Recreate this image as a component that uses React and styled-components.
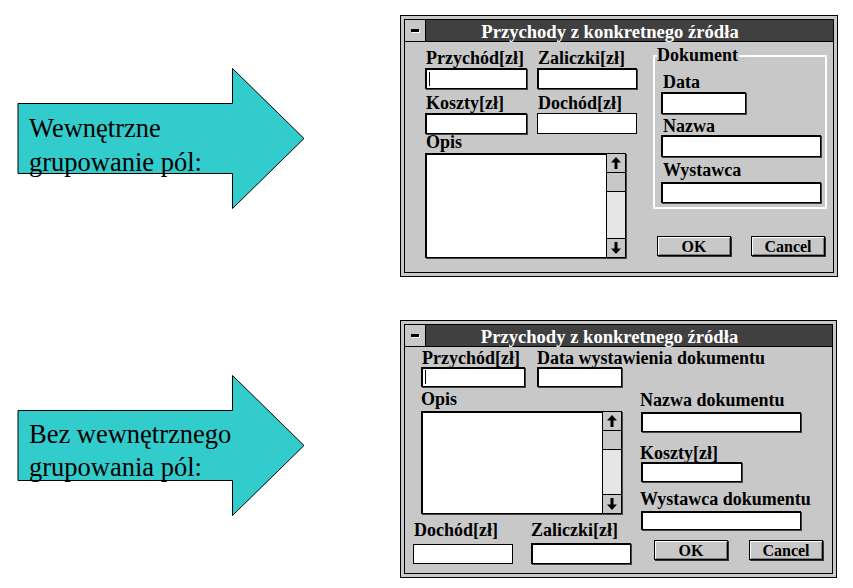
import React from 'react'
import styled, { createGlobalStyle } from 'styled-components'

const GlobalStyle = createGlobalStyle`
  html, body {
    margin: 0;
    padding: 0;
    background: #fff;
  }
  body {
    font-family: "Liberation Serif", "Times New Roman", serif;
    color: #000;
  }
`

const Page = styled.div`
  width: 853px;
  height: 588px;
  padding-top: 15px;
  box-sizing: border-box;
  display: flex;
  flex-direction: column;
  gap: 43px;
`

const Row = styled.div`
  display: flex;
  align-items: flex-start;
`

/* ---------- arrow ---------- */

const ArrowSlot = styled.div`
  flex: none;
  width: 400px;
  box-sizing: border-box;
  padding: ${({ $top }) => $top}px 0 0 17px;
`

const ArrowShape = styled.div`
  position: relative;
  width: 288px;
  height: 141px;
`

const ArrowSvg = styled.svg`
  position: absolute;
  left: 0;
  top: 0;
`

const ArrowText = styled.p`
  position: relative;
  margin: 0;
  padding: 43px 0 0 12px;
  font-family: "Liberation Serif", "Times New Roman", serif;
  font-size: 26.5px;
  line-height: ${({ $lh }) => $lh}px;
  white-space: nowrap;
`

const Arrow = ({ top, lh, lines }) => (
  <ArrowSlot $top={top}>
    <ArrowShape>
      <ArrowSvg width="288" height="141" viewBox="0 0 288 141">
        <polygon
          points="1,35.5 215.5,35.5 215.5,0.5 287,70.5 215.5,140.5 215.5,105.5 1,105.5"
          fill="#33cccc"
          stroke="#000"
          strokeWidth="1"
        />
      </ArrowSvg>
      <ArrowText $lh={lh}>
        {lines[0]}
        <br />
        {lines[1]}
      </ArrowText>
    </ArrowShape>
  </ArrowSlot>
)

/* ---------- window chrome ---------- */

const Window = styled.div`
  flex: none;
  width: ${({ $w }) => $w}px;
  height: ${({ $h }) => $h}px;
  box-sizing: border-box;
  border: 1px solid #000;
  padding: 3px;
  background: #c8c8c8;
`

const WindowInner = styled.div`
  height: 100%;
  box-sizing: border-box;
  border: 1px solid #000;
  display: flex;
  flex-direction: column;
`

const TitleBar = styled.div`
  flex: none;
  height: 22px;
  box-sizing: border-box;
  display: flex;
  background: #404040;
  border-bottom: 1px solid #000;
`

const MenuBox = styled.div`
  flex: none;
  width: 21px;
  box-sizing: border-box;
  background: #c8c8c8;
  border-right: 1px solid #000;
  display: flex;
  align-items: center;
  justify-content: center;
`

const MenuDash = styled.span`
  width: 8px;
  height: 3px;
  background: #000;
  box-shadow: 1px 1px 0 #fff;
`

const Title = styled.div`
  flex: 1;
  text-align: center;
  padding-right: 39px;
  color: #fff;
  font-weight: bold;
  font-size: 18.6px;
  line-height: 23px;
  white-space: nowrap;
`

const Client = styled.div`
  flex: 1;
  display: flex;
`

/* ---------- controls ---------- */

const Pane = styled.div`
  flex: none;
  width: ${({ $w }) => ($w ? `${$w}px` : 'auto')};
  box-sizing: border-box;
  padding: ${({ $pad }) => $pad};
  display: flex;
  flex-direction: column;
`

const FieldRow = styled.div`
  display: flex;
  gap: ${({ $gap }) => $gap}px;
  margin-top: ${({ $mt }) => $mt || 0}px;
  margin-left: ${({ $ml }) => $ml || 0}px;
`

const Field = styled.div`
  display: flex;
  flex-direction: column;
  align-items: flex-start;
  gap: ${({ $gap }) => ($gap == null ? 1 : $gap)}px;
  margin-top: ${({ $mt }) => $mt || 0}px;
  width: ${({ $w }) => ($w ? `${$w}px` : 'auto')};
`

const Label = styled.div`
  height: 17px;
  padding-left: ${({ $indent }) => ($indent == null ? 1 : $indent)}px;
  font-weight: bold;
  font-size: 18px;
  line-height: 17px;
  white-space: nowrap;
`

const TextBox = styled.div`
  width: ${({ $w }) => $w}px;
  height: ${({ $h }) => $h || 21}px;
  margin-left: ${({ $ml }) => $ml || 0}px;
  box-sizing: border-box;
  background: #fff;
  border: 1px solid #000;
  box-shadow: ${({ $flat }) =>
    $flat ? 'none' : 'inset 1px 1px 0 #000, 1px 1px 0 #444'};
  display: flex;
  align-items: center;
  padding-left: 3px;
`

const Caret = styled.span`
  width: 1px;
  height: 14px;
  background: #000;
`

const Memo = styled.div`
  width: ${({ $w }) => $w}px;
  height: ${({ $h }) => $h}px;
  box-sizing: border-box;
  display: flex;
  background: #fff;
  border: 1px solid #000;
  box-shadow: inset 1px 1px 0 #000, 1px 1px 0 #444;
`

const MemoArea = styled.div`
  flex: 1;
`

const ScrollBar = styled.div`
  flex: none;
  width: 18px;
  display: flex;
  flex-direction: column;
  border-left: 1px solid #000;
  background: #e6e6e6;
`

const ScrollBtn = styled.div`
  flex: none;
  height: 19px;
  box-sizing: border-box;
  background: #c8c8c8;
  border-top: ${({ $down }) => ($down ? '1px solid #000' : 'none')};
  border-bottom: ${({ $down }) => ($down ? 'none' : '1px solid #000')};
  display: flex;
  align-items: center;
  justify-content: center;
`

const Thumb = styled.div`
  flex: none;
  height: 19px;
  box-sizing: border-box;
  background: #c8c8c8;
  border-bottom: 1px solid #000;
`

const Track = styled.div`
  flex: 1;
`

const ArrowGlyph = ({ down }) => (
  <svg width="10" height="12" viewBox="0 0 10 12">
    <polygon
      points="5,0 10,5.5 6.5,5.5 6.5,12 3.5,12 3.5,5.5 0,5.5"
      fill="#000"
      transform={down ? 'rotate(180 5 6)' : undefined}
    />
  </svg>
)

const MemoBox = ({ w, h }) => (
  <Memo $w={w} $h={h}>
    <MemoArea />
    <ScrollBar>
      <ScrollBtn>
        <ArrowGlyph />
      </ScrollBtn>
      <Thumb />
      <Track />
      <ScrollBtn $down>
        <ArrowGlyph down />
      </ScrollBtn>
    </ScrollBar>
  </Memo>
)

const GroupBox = styled.fieldset`
  margin: 5px 0 0 0;
  padding: 0;
  min-width: 0;
  width: 174px;
  box-sizing: border-box;
  border: 2px solid #fff;
`

const Legend = styled.legend`
  margin-left: 2px;
  padding: 0 1px 0 0;
  font-weight: bold;
  font-size: 18px;
  line-height: 17px;
`

const GroupBody = styled.div`
  display: flex;
  flex-direction: column;
  padding: 10px 4px 4px 6px;
`

const ButtonRow = styled.div`
  display: flex;
  gap: ${({ $gap }) => $gap}px;
  margin: ${({ $mt }) => $mt}px 0 0 ${({ $ml }) => $ml}px;
`

const Button = styled.div`
  width: 74px;
  height: 20px;
  box-sizing: border-box;
  border: 1px solid #000;
  background: #c8c8c8;
  box-shadow: inset 1px 1px 0 #fff, inset -1px -1px 0 #808080,
    1px 1px 0 #333;
  font-weight: bold;
  font-size: 16px;
  line-height: 19px;
  text-align: center;
`

const TitleBarBlock = () => (
  <TitleBar>
    <MenuBox>
      <MenuDash />
    </MenuBox>
    <Title>Przychody z konkretnego źródła</Title>
  </TitleBar>
)

/* ---------- dialogs ---------- */

const GroupedDialog = () => (
  <Window $w={438} $h={262}>
    <WindowInner>
      <TitleBarBlock />
      <Client>
        <Pane $w={232} $pad="8px 0 0 20px">
          <FieldRow $gap={10}>
            <Field $w={102}>
              <Label>Przychód[zł]</Label>
              <TextBox $w={102}>
                <Caret />
              </TextBox>
            </Field>
            <Field $w={100}>
              <Label>Zaliczki[zł]</Label>
              <TextBox $w={100} />
            </Field>
          </FieldRow>
          <FieldRow $gap={10} $mt={6}>
            <Field $w={102}>
              <Label>Koszty[zł]</Label>
              <TextBox $w={102} />
            </Field>
            <Field $w={100}>
              <Label>Dochód[zł]</Label>
              <TextBox $w={100} $flat />
            </Field>
          </FieldRow>
          <Field $gap={2}>
            <Label>Opis</Label>
            <MemoBox w={201} h={105} />
          </Field>
        </Pane>
        <Pane $pad="0 0 0 16px">
          <GroupBox>
            <Legend>Dokument</Legend>
            <GroupBody>
              <Field>
                <Label $indent={2}>Data</Label>
                <TextBox $w={85} $h={22} />
              </Field>
              <Field $gap={0} $mt={4}>
                <Label $indent={2}>Nazwa</Label>
                <TextBox $w={160} $h={22} />
              </Field>
              <Field $gap={3} $mt={5}>
                <Label $indent={2}>Wystawca</Label>
                <TextBox $w={160} />
              </Field>
            </GroupBody>
          </GroupBox>
          <ButtonRow $gap={20} $mt={27} $ml={4}>
            <Button>OK</Button>
            <Button>Cancel</Button>
          </ButtonRow>
        </Pane>
      </Client>
    </WindowInner>
  </Window>
)

const FlatDialog = () => (
  <Window $w={437} $h={258}>
    <WindowInner>
      <TitleBarBlock />
      <Client>
        <Pane $w={235} $pad="3px 0 0 8px">
          <FieldRow $gap={12} $ml={8}>
            <Field $w={104} $gap={0}>
              <Label>Przychód[zł]</Label>
              <TextBox $w={104} $h={20}>
                <Caret />
              </TextBox>
            </Field>
            <Field $w={85} $gap={0}>
              <Label $indent={0}>Data wystawienia dokumentu</Label>
              <TextBox $w={85} $h={20} />
            </Field>
          </FieldRow>
          <FieldRow $mt={4} $ml={8}>
            <Field $gap={3}>
              <Label $indent={0}>Opis</Label>
              <MemoBox w={201} h={103} />
            </Field>
          </FieldRow>
          <FieldRow $gap={18} $mt={8}>
            <Field $w={100} $gap={5}>
              <Label>Dochód[zł]</Label>
              <TextBox $w={100} $h={20} $flat />
            </Field>
            <Field $w={100} $gap={4}>
              <Label $indent={0}>Zaliczki[zł]</Label>
              <TextBox $w={100} $h={21} />
            </Field>
          </FieldRow>
        </Pane>
        <Pane $pad="45px 0 0 0">
          <Field $gap={3}>
            <Label $indent={0}>Nazwa dokumentu</Label>
            <TextBox $w={160} $h={20} $ml={1} />
          </Field>
          <Field $gap={0} $mt={13}>
            <Label $indent={0}>Koszty[zł]</Label>
            <TextBox $w={101} $h={20} $ml={1} />
          </Field>
          <Field $gap={3} $mt={9}>
            <Label $indent={0}>Wystawca dokumentu</Label>
            <TextBox $w={160} $h={19} $ml={1} />
          </Field>
          <ButtonRow $gap={21} $mt={10} $ml={14}>
            <Button>OK</Button>
            <Button>Cancel</Button>
          </ButtonRow>
        </Pane>
      </Client>
    </WindowInner>
  </Window>
)

const App = () => {
  return (
    <>
      <GlobalStyle />
      <Page>
        <Row>
          <Arrow top={53} lh={34} lines={['Wewnętrzne', 'grupowanie pól:']} />
          <GroupedDialog />
        </Row>
        <Row>
          <Arrow top={55} lh={33} lines={['Bez wewnętrznego', 'grupowania pól:']} />
          <FlatDialog />
        </Row>
      </Page>
    </>
  )
}

export default App
